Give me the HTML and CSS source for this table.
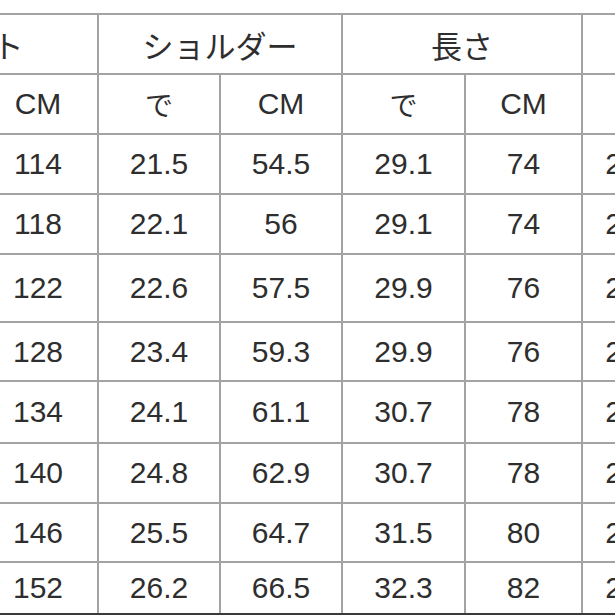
FILE: index.html
```html
<!DOCTYPE html>
<html lang="ja">
<head>
<meta charset="utf-8">
<link rel="stylesheet" href="styles.css">
</head>
<body>
<div class="frame">
<table class="size-table">
  <colgroup>
    <col class="c1"><col class="c2"><col class="c3"><col class="c4"><col class="c5"><col class="c6"><col class="c7"><col class="c8">
  </colgroup>
  <thead>
    <tr class="r-group">
      <th colspan="2">バスト</th>
      <th colspan="2">ショルダー</th>
      <th colspan="2">長さ</th>
      <th colspan="2">袖丈</th>
    </tr>
    <tr class="r-unit">
      <th>で</th><th>CM</th>
      <th>で</th><th>CM</th>
      <th>で</th><th>CM</th>
      <th>で</th><th>CM</th>
    </tr>
  </thead>
  <tbody>
    <tr class="r1"><td>44.9</td><td>114</td><td>21.5</td><td>54.5</td><td>29.1</td><td>74</td><td>23.2</td><td>59</td></tr>
    <tr class="r2"><td>46.5</td><td>118</td><td>22.1</td><td>56</td><td>29.1</td><td>74</td><td>23.6</td><td>60</td></tr>
    <tr class="r3"><td>48.0</td><td>122</td><td>22.6</td><td>57.5</td><td>29.9</td><td>76</td><td>24.0</td><td>61</td></tr>
    <tr class="r4"><td>50.4</td><td>128</td><td>23.4</td><td>59.3</td><td>29.9</td><td>76</td><td>24.4</td><td>62</td></tr>
    <tr class="r5"><td>52.8</td><td>134</td><td>24.1</td><td>61.1</td><td>30.7</td><td>78</td><td>24.8</td><td>63</td></tr>
    <tr class="r6"><td>55.1</td><td>140</td><td>24.8</td><td>62.9</td><td>30.7</td><td>78</td><td>25.2</td><td>64</td></tr>
    <tr class="r7"><td>57.5</td><td>146</td><td>25.5</td><td>64.7</td><td>31.5</td><td>80</td><td>25.6</td><td>65</td></tr>
    <tr class="r8"><td>59.8</td><td>152</td><td>26.2</td><td>66.5</td><td>32.3</td><td>82</td><td>26.0</td><td>66</td></tr>
  </tbody>
</table>
</div>
</body>
</html>
```

FILE: styles.css
```css
html, body {
  margin: 0;
  padding: 0;
  background: #ffffff;
  overflow: hidden;
}
.frame {
  width: 615px;
  height: 615px;
  overflow: hidden;
}
.size-table {
  border-collapse: collapse;
  table-layout: fixed;
  width: 953px;
  margin-left: -145px;
  margin-top: 13px;
  font-family: "Liberation Sans", "Noto Sans CJK JP", sans-serif;
  font-size: 30px;
  color: #2e2e2e;
}
.c1 { width: 122px; }
.c2 { width: 120px; }
.c3 { width: 122px; }
.c4 { width: 122px; }
.c5 { width: 123px; }
.c6 { width: 117px; }
.c7 { width: 105px; }
.c8 { width: 122px; }
.size-table th,
.size-table td {
  border: 2px solid #a3a3a3;
  text-align: center;
  vertical-align: middle;
  padding: 0;
  font-weight: normal;
  line-height: 1;
}
.r-group th {
  font-family: "Noto Sans CJK JP", "Liberation Sans", sans-serif;
  font-size: 31px;
  height: 58px;
}
.r-unit th { height: 58px; }
.r-unit th:nth-child(odd) {
  font-family: "Noto Sans CJK JP", sans-serif;
  font-size: 28px;
}
.r1 td, .r2 td, .r6 td { height: 58px; }
.r3 td { height: 66px; }
.r4 td, .r7 td { height: 57px; }
.r5 td { height: 60px; }
.r8 td { height: 50px; border-bottom: 2px solid #3a3a3a; }
```
